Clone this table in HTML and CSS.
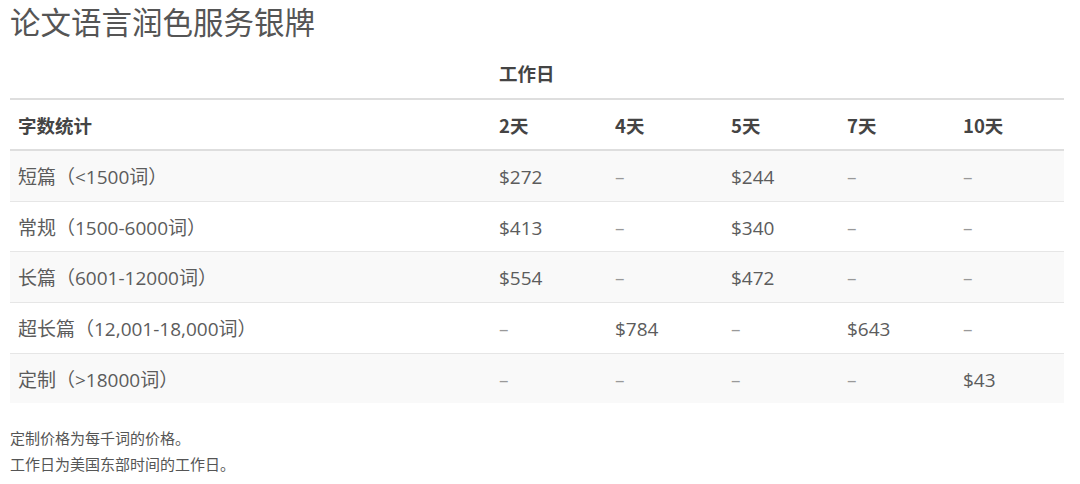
FILE: index.html
```html
<!DOCTYPE html>
<html lang="zh-CN">
<head>
<meta charset="utf-8">
<title>论文语言润色服务银牌</title>
<link rel="stylesheet" href="styles.css">
</head>
<body>
<div class="page">
  <h1 class="title">论文语言润色服务银牌</h1>
  <table class="price-table">
    <colgroup>
      <col class="c-first">
      <col class="c-day">
      <col class="c-day">
      <col class="c-day">
      <col class="c-day">
      <col class="c-last">
    </colgroup>
    <thead>
      <tr class="group-row">
        <th></th>
        <th colspan="5">工作日</th>
      </tr>
      <tr class="head-row">
        <th>字数统计</th>
        <th>2天</th>
        <th>4天</th>
        <th>5天</th>
        <th>7天</th>
        <th>10天</th>
      </tr>
    </thead>
    <tbody>
      <tr>
        <td>短篇（&lt;1500词）</td>
        <td>$272</td>
        <td class="na">–</td>
        <td>$244</td>
        <td class="na">–</td>
        <td class="na">–</td>
      </tr>
      <tr>
        <td>常规（1500-6000词）</td>
        <td>$413</td>
        <td class="na">–</td>
        <td>$340</td>
        <td class="na">–</td>
        <td class="na">–</td>
      </tr>
      <tr>
        <td>长篇（6001-12000词）</td>
        <td>$554</td>
        <td class="na">–</td>
        <td>$472</td>
        <td class="na">–</td>
        <td class="na">–</td>
      </tr>
      <tr>
        <td>超长篇（12,001-18,000词）</td>
        <td class="na">–</td>
        <td>$784</td>
        <td class="na">–</td>
        <td>$643</td>
        <td class="na">–</td>
      </tr>
      <tr>
        <td>定制（&gt;18000词）</td>
        <td class="na">–</td>
        <td class="na">–</td>
        <td class="na">–</td>
        <td class="na">–</td>
        <td>$43</td>
      </tr>
    </tbody>
  </table>
  <div class="notes">
    <p>定制价格为每千词的价格。</p>
    <p>工作日为美国东部时间的工作日。</p>
  </div>
</div>
</body>
</html>
```

FILE: styles.css
```css
html, body {
  margin: 0;
  padding: 0;
  background: #fff;
}

body {
  font-family: "Open Sans", "Noto Sans CJK SC", sans-serif;
  color: #555;
}

.page {
  padding: 0 16px 0 10px;
}

.title {
  margin: 0;
  padding-top: 2px;
  font-family: "Noto Sans CJK SC", sans-serif;
  font-weight: 400;
  font-size: 30.5px;
  line-height: 38px;
  color: #555;
}

.price-table {
  width: 1054px;
  margin-top: 9px;
  border-collapse: collapse;
  table-layout: fixed;
  font-size: 19px;
}

.c-first { width: 481px; }
.c-day { width: 116px; }
.c-last { width: 109px; }

.price-table th,
.price-table td {
  text-align: left;
  padding: 14px 8px 10px;
  line-height: 25.6px;
  vertical-align: middle;
}

.price-table th {
  font-family: "Noto Sans CJK SC", sans-serif;
  font-weight: 700;
  font-size: 18.5px;
  color: #444;
}

.group-row th {
  padding-top: 12px;
  padding-bottom: 11px;
  border-bottom: 2px solid #dedede;
}

.head-row th {
  padding-top: 13px;
  padding-bottom: 11px;
  border-bottom: 2px solid #dedede;
}

.price-table td {
  border-bottom: 1px solid #e6e6e6;
  font-weight: 400;
  color: #5c5c5c;
}

.price-table tbody tr:nth-child(odd) {
  background: #f9f9f9;
}

.price-table tbody tr:last-child td {
  border-bottom: none;
}

.price-table td.na {
  color: #999;
}

.notes {
  margin-top: 22px;
  font-family: "Noto Sans CJK SC", sans-serif;
  font-size: 15px;
  line-height: 26px;
  color: #555;
}

.notes p {
  margin: 0;
}
```
